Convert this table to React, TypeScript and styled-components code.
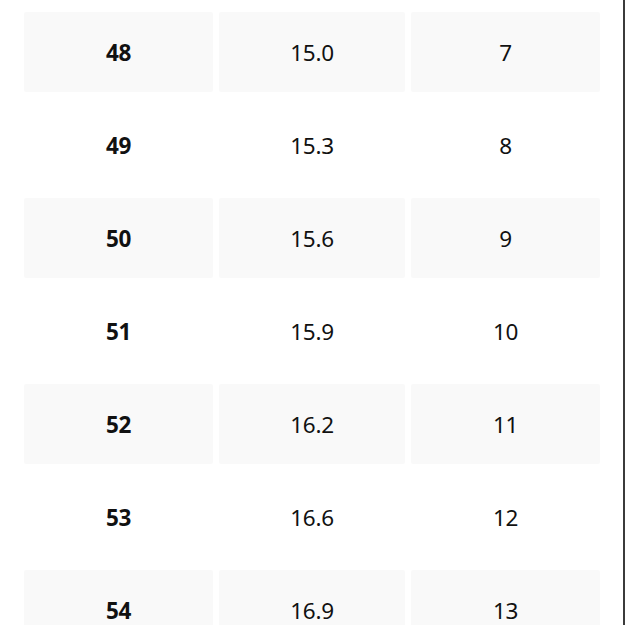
import styled, { createGlobalStyle } from "styled-components";

const GlobalStyle = createGlobalStyle`
  html, body {
    margin: 0;
    padding: 0;
    background: #ffffff;
  }
  body {
    font-family: "Noto Sans", "Liberation Sans", sans-serif;
  }
`;

const Page = styled.div`
  box-sizing: border-box;
  width: 625px;
  height: 625px;
  overflow: hidden;
  border-right: 2px solid #3b3b3b;
  padding: 12px 0 0 24px;
  background: #ffffff;
`;

const Table = styled.div`
  display: grid;
  grid-template-columns: 189px 186px 189px;
  grid-auto-rows: 80px;
  column-gap: 6px;
  row-gap: 13px;
`;

const Cell = styled.div<{ $shaded: boolean; $bold?: boolean }>`
  display: flex;
  align-items: center;
  justify-content: center;
  background: ${(p) => (p.$shaded ? "#f9f9f9" : "transparent")};
  border-radius: 2px;
  font-size: 22.5px;
  font-weight: ${(p) => (p.$bold ? 700 : 400)};
  color: #111111;
  letter-spacing: -0.3px;
`;

const rows: [string, string, string][] = [
  ["48", "15.0", "7"],
  ["49", "15.3", "8"],
  ["50", "15.6", "9"],
  ["51", "15.9", "10"],
  ["52", "16.2", "11"],
  ["53", "16.6", "12"],
  ["54", "16.9", "13"],
];

export default function App() {
  return (
    <>
      <GlobalStyle />
      <Page>
        <Table>
          {rows.map((row, i) =>
            row.map((value, j) => (
              <Cell key={`${i}-${j}`} $shaded={i % 2 === 0} $bold={j === 0}>
                {value}
              </Cell>
            ))
          )}
        </Table>
      </Page>
    </>
  );
}
